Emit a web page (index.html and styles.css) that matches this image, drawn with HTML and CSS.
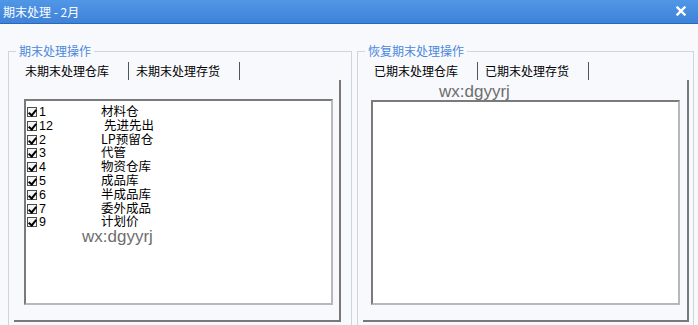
FILE: index.html
```html
<!DOCTYPE html>
<html lang="zh-CN">
<head>
    <meta charset="UTF-8">
    <meta name="viewport" content="width=device-width, initial-scale=1.0">
    <title>期末处理 - 2月</title>
    <link rel="stylesheet" href="styles.css">
</head>
<body>
    <div class="window">
        <!-- Title bar -->
        <div class="titlebar">
            <span class="title">期末处理 - 2月</span>
            <svg class="close" width="10" height="10" viewBox="0 0 10 10">
                <path d="M1.5 1.5 L8.5 8.5 M8.5 1.5 L1.5 8.5" stroke="#fff" stroke-width="2.4" stroke-linecap="square"/>
            </svg>
        </div>

        <div class="content">
            <!-- Left: period-end processing -->
            <fieldset class="group group-left">
                <legend>期末处理操作</legend>
                <div class="tabs">
                    <span class="tab tab-first">未期末处理仓库</span>
                    <span class="tab">未期末处理存货</span>
                </div>
                <div class="tab-page page-left">
                    <ul class="listbox">
                        <li><span class="check"></span><span class="code">1</span><span class="name">材料仓</span></li>
                        <li><span class="check"></span><span class="code">12</span><span class="name indent">先进先出</span></li>
                        <li><span class="check"></span><span class="code">2</span><span class="name">LP预留仓</span></li>
                        <li><span class="check"></span><span class="code">3</span><span class="name">代管</span></li>
                        <li><span class="check"></span><span class="code">4</span><span class="name">物资仓库</span></li>
                        <li><span class="check"></span><span class="code">5</span><span class="name">成品库</span></li>
                        <li><span class="check"></span><span class="code">6</span><span class="name">半成品库</span></li>
                        <li><span class="check"></span><span class="code">7</span><span class="name">委外成品</span></li>
                        <li><span class="check"></span><span class="code">9</span><span class="name">计划价</span></li>
                    </ul>
                    <span class="watermark wm-left">wx:dgyyrj</span>
                </div>
            </fieldset>

            <!-- Right: undo period-end processing -->
            <fieldset class="group group-right">
                <legend>恢复期末处理操作</legend>
                <div class="tabs">
                    <span class="tab tab-first">已期末处理仓库</span>
                    <span class="tab">已期末处理存货</span>
                </div>
                <div class="tab-page page-right">
                    <ul class="listbox"></ul>
                    <span class="watermark wm-right">wx:dgyyrj</span>
                </div>
            </fieldset>
        </div>
    </div>
</body>
</html>
```

FILE: styles.css
```css
* {
    box-sizing: border-box;
}

html, body {
    margin: 0;
    height: 325px;
    overflow: hidden;
}

body {
    font-family: "Liberation Sans", "Noto Sans CJK SC", sans-serif;
    font-size: 12px;
    color: #000;
    background-color: #f8f9fc;
}

.window {
    width: 698px;
}

/* Title bar */
.titlebar {
    height: 24px;
    display: flex;
    align-items: center;
    justify-content: space-between;
    padding: 0 12px 0 3px;
    background: linear-gradient(#5097e6, #3f82d9);
    border-bottom: 1px solid #2d68b8;
}

.title {
    color: #fff;
    font-family: "Noto Sans CJK SC", sans-serif;
    font-size: 12px;
    line-height: 16px;
}

.close {
    margin-top: -2px;
}

/* Main area */
.content {
    display: flex;
    gap: 5px;
    padding: 19px 0 0 8px;
}

.group {
    margin: 0;
    border: 1px solid #cdd5e0;
    padding: 3px 10px 12px 5px;
    min-width: 0;
}

.group-left {
    width: 344px;
}

.group-right {
    width: 337px;
    padding-right: 4px;
}

.group legend {
    margin-left: 2px;
    padding: 0 3px;
    font-family: "Noto Sans CJK SC", sans-serif;
    font-size: 12px;
    line-height: 16px;
    color: #4a88dc;
}

/* Tabs */
.tabs {
    display: flex;
    height: 18px;
}

.tab {
    padding: 0 19px 0 7px;
    border-right: 1px solid #555;
    font-family: "Noto Sans CJK SC", sans-serif;
    line-height: 18px;
    white-space: nowrap;
}

.tab-first {
    margin-left: 4px;
}

.tab-page {
    position: relative;
    height: 242px;
    padding: 19px 6px 0 10px;
    border-right: 2px solid #787878;
    border-bottom: 2px solid #787878;
}

.page-right {
    padding: 20px 7px 0 8px;
}

/* List box */
.listbox {
    margin: 0;
    padding: 3px 0 0 1px;
    list-style: none;
    height: 206px;
    background-color: #fff;
    border-top: 2px solid #7a7a7a;
    border-left: 2px solid #7a7a7a;
    border-right: 2px solid #b8b8b8;
    border-bottom: 2px solid #b8b8b8;
    overflow: hidden;
}

.page-right .listbox {
    height: 205px;
}

.listbox li {
    height: 13.8px;
    line-height: 13.8px;
    white-space: nowrap;
    font-size: 12.5px;
}

.check {
    display: inline-block;
    position: relative;
    width: 10px;
    height: 10px;
    vertical-align: -1px;
    border: 1px solid #4c4c4c;
    background-color: #f4f4f4;
}

.check::after {
    content: "";
    position: absolute;
    left: 2px;
    top: 0;
    width: 3px;
    height: 6px;
    border-right: 2px solid #000;
    border-bottom: 2px solid #000;
    transform: rotate(40deg);
}

.code {
    display: inline-block;
    width: 64px;
    padding-left: 2px;
}

.name {
    font-family: "Noto Sans CJK SC", sans-serif;
}

.name.indent {
    padding-left: 3px;
}

/* Overlay text */
.watermark {
    position: absolute;
    font-family: "Liberation Sans", sans-serif;
    font-size: 17px;
    line-height: 19px;
    color: #6e6e6e;
}

.wm-left {
    left: 68px;
    top: 147px;
}

.wm-right {
    left: 76px;
    top: 2px;
}
```
